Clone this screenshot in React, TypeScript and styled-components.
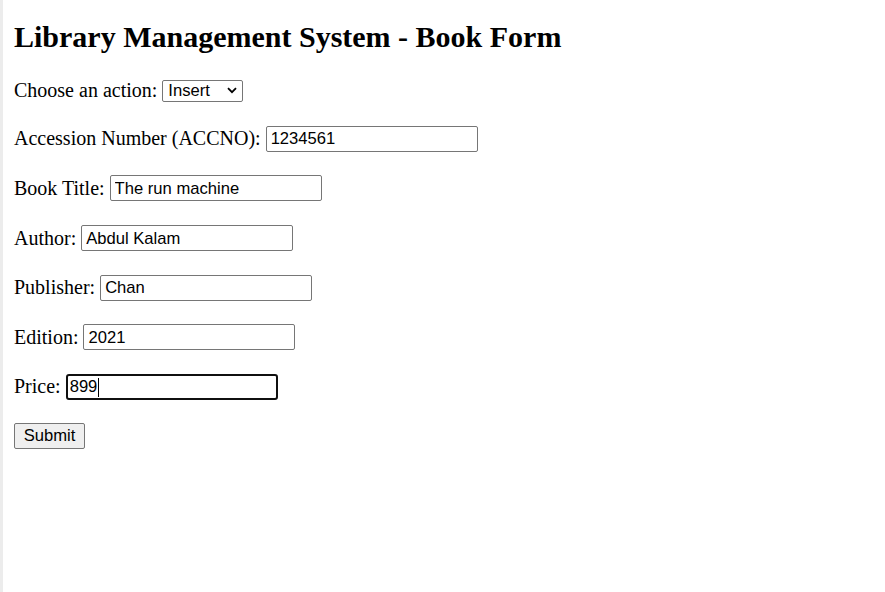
import React from "react";
import styled, { createGlobalStyle } from "styled-components";

const Global = createGlobalStyle`
  html, body { margin: 0; padding: 0; background: #fff; }
  body { font-family: "Liberation Serif", "Times New Roman", serif; color: #000; }
`;

const Page = styled.div`
  display: flex;
  min-height: 592px;
`;

const Edge = styled.div`
  width: 3px;
  background: #ececec;
  flex: none;
`;

const Content = styled.main`
  flex: 1;
  padding: 0 11px;
  font-size: 20px;
`;

const Title = styled.h1`
  font-size: 30px;
  font-weight: bold;
  margin: 20px 0 0;
  line-height: 34px;
`;

const Form = styled.form`
  display: flex;
  flex-direction: column;
  gap: 22.6px;
  margin-top: 25px;
`;

const Row = styled.div<{ $compact?: boolean }>`
  display: flex;
  align-items: center;
  height: ${(p) => (p.$compact ? "23.8px" : "27px")};
  white-space: pre;
`;

const Label = styled.label`
  margin-right: 5px;
`;

const SelectWrap = styled.span`
  position: relative;
  display: inline-flex;
`;

const Select = styled.select`
  appearance: none;
  width: 81px;
  height: 22px;
  border: 1px solid #767676;
  border-radius: 2px;
  background: #fff;
  font-family: "Liberation Sans", Arial, sans-serif;
  font-size: 16.6px;
  color: #000;
  padding: 0 0 0 5px;
  margin: 0;
`;

const Chevron = styled.svg`
  position: absolute;
  right: 6px;
  top: 7px;
  pointer-events: none;
`;

const FieldWrap = styled.span`
  position: relative;
  display: inline-flex;
`;

const Input = styled.input<{ $focused?: boolean }>`
  box-sizing: border-box;
  width: 212px;
  height: 26px;
  margin: 0;
  padding: 1px 3px 0 4px;
  border: ${(p) => (p.$focused ? "2px solid #101010" : "1px solid #767676")};
  border-radius: ${(p) => (p.$focused ? "3px" : "2px")};
  padding-left: ${(p) => (p.$focused ? "2px" : "4px")};
  font-family: "Liberation Sans", Arial, sans-serif;
  font-size: 16.6px;
  color: #000;
  outline: none;
  background: #fff;
`;

const Caret = styled.span`
  position: absolute;
  left: 32px;
  top: 4px;
  width: 1px;
  height: 19px;
  background: #000;
`;

const Button = styled.button`
  box-sizing: border-box;
  width: 71px;
  height: 26px;
  margin: 0;
  padding: 0;
  border: 1px solid #767676;
  border-radius: 2px;
  background: #efefef;
  font-family: "Liberation Sans", Arial, sans-serif;
  font-size: 16.6px;
  color: #000;
`;

const fields = [
  { label: "Accession Number (ACCNO):", value: "1234561" },
  { label: "Book Title:", value: "The run machine" },
  { label: "Author:", value: "Abdul Kalam" },
  { label: "Publisher:", value: "Chan" },
  { label: "Edition:", value: "2021" },
];

export default function App() {
  return (
    <>
      <Global />
      <Page>
        <Edge />
        <Content>
          <Title>Library Management System - Book Form</Title>
          <Form onSubmit={(e) => e.preventDefault()}>
            <Row $compact>
              <Label>Choose an action:</Label>
              <SelectWrap>
                <Select defaultValue="insert">
                  <option value="insert">Insert</option>
                  <option value="update">Update</option>
                  <option value="delete">Delete</option>
                </Select>
                <Chevron width="10" height="7" viewBox="0 0 10 7">
                  <path d="M1 1.2 L5 5.2 L9 1.2" fill="none" stroke="#000" strokeWidth="1.8" />
                </Chevron>
              </SelectWrap>
            </Row>
            {fields.map((f) => (
              <Row key={f.label}>
                <Label>{f.label}</Label>
                <Input type="text" defaultValue={f.value} />
              </Row>
            ))}
            <Row>
              <Label>Price:</Label>
              <FieldWrap>
                <Input type="text" defaultValue="899" $focused />
                <Caret />
              </FieldWrap>
            </Row>
            <Row>
              <Button type="submit">Submit</Button>
            </Row>
          </Form>
        </Content>
      </Page>
    </>
  );
}
